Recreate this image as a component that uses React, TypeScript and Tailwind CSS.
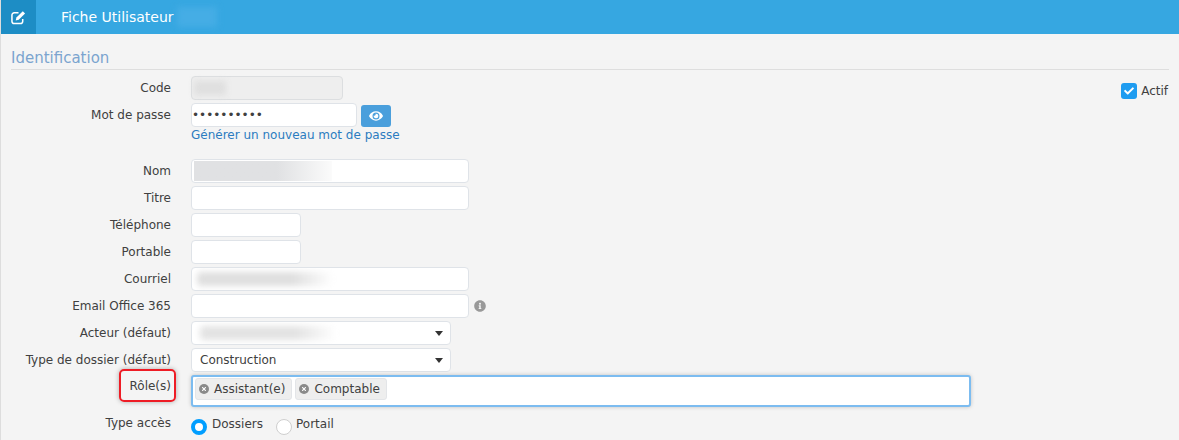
import React from 'react';
import { FaEye, FaInfoCircle, FaCheck, FaTimes } from 'react-icons/fa';

const field = 'h-6 rounded-[4px] border border-[#dfe3e8] bg-white';

function Row({ label, children, className = '' }: { label: React.ReactNode; children: React.ReactNode; className?: string }) {
  return (
    <div className={`flex items-center ${className}`}>
      <div className="w-[160px] shrink-0 text-right">{label}</div>
      <div className="ml-5 flex flex-1 items-center">{children}</div>
    </div>
  );
}

function Select({ children }: { children?: React.ReactNode }) {
  return (
    <div className={`${field} flex w-[260px] items-center overflow-hidden pr-[7px]`}>
      <div className="min-w-0 flex-1">{children}</div>
      <div className="h-0 w-0 border-x-[4px] border-t-[5px] border-x-transparent border-t-[#333]" />
    </div>
  );
}

function Tag({ children }: { children: React.ReactNode }) {
  return (
    <div className="flex h-[22px] items-center rounded-[3px] border border-[#e3e5e8] bg-[#eeeeee] pl-[3px] pr-[6px]">
      <span className="mr-[5px] flex h-[10px] w-[10px] items-center justify-center rounded-full bg-[#8a8a8a] text-white">
        <FaTimes className="h-[6px] w-[6px]" />
      </span>
      {children}
    </div>
  );
}

export default function App() {
  return (
    <div className="h-[440px] w-[1179px] overflow-hidden border-l border-[#dddddd] bg-[#f4f4f4] font-['DejaVu_Sans',sans-serif] text-[12px] leading-[16px] text-[#404040]">
      <div className="-ml-px flex h-[34px] items-center bg-[#36a7e1]">
        <div className="flex h-full w-[36px] items-center justify-center bg-[#1d8dc5] text-white">
          <svg viewBox="0 0 16 16" className="h-[15px] w-[15px]" fill="none">
            <path d="M12.5 9.5v2.5a2.5 2.5 0 0 1-2.5 2.5H3.5A2.5 2.5 0 0 1 1 12V5.5A2.5 2.5 0 0 1 3.5 3H8" stroke="currentColor" strokeWidth="1.6" />
            <path d="M12.6 1.2 15 3.6 8.2 10.4 5 11.2 5.8 8z" fill="currentColor" />
          </svg>
        </div>
        <div className="ml-[25px] text-[14px] text-white">Fiche Utilisateur</div>
        <div className="ml-[3px] h-5 w-10 bg-[#45ade5] blur-[3px]" />
      </div>

      <div className="pl-[10px] pr-[10px]">
        <div className="mt-[15px] h-[21px] border-b border-[#dedede] text-[15px] leading-[18px] text-[#7ba4cf]">Identification</div>

        <div className="mt-[6px] flex flex-col gap-[3px]">
          <Row label="Code" className="h-6">
            <div className="flex h-6 w-[152px] items-center rounded-[4px] border border-[#dcdee0] bg-[#eeeeee]">
              <div className="ml-[2px] h-[14px] w-8 bg-[#dfdfdf] blur-[3px]" />
            </div>
            <div className="ml-auto mr-[1px] mt-[5px] flex items-center">
              <span className="flex h-4 w-4 items-center justify-center rounded-[3px] bg-[#1e9cf0] text-white">
                <FaCheck className="h-[10px] w-[10px]" />
              </span>
              <span className="ml-[4px]">Actif</span>
            </div>
          </Row>

          <div>
            <Row label="Mot de passe" className="h-6">
              <div className={`${field} flex w-[166px] items-center text-[12px]`}>••••••••••</div>
              <button className="ml-1 mt-[1px] flex h-[22px] w-[30px] items-center justify-center rounded-[3px] bg-[#4a9fdc] text-white">
                <FaEye className="h-[14px] w-[14px]" />
              </button>
            </Row>
            <div className="ml-[180px] h-[16px] text-[#2b7cc0]">Générer un nouveau mot de passe</div>
          </div>

          <Row label="Nom" className="mt-[13px] h-6">
            <div className={`${field} flex w-[278px] items-center overflow-hidden`}>
              <div className="ml-[2px] h-5 w-[138px] bg-linear-to-r from-[#e0e1e3] from-60% to-[#fbfbfb]" />
            </div>
          </Row>
          <Row label="Titre" className="h-6"><div className={`${field} w-[278px]`} /></Row>
          <Row label="Téléphone" className="h-6"><div className={`${field} w-[110px]`} /></Row>
          <Row label="Portable" className="h-6"><div className={`${field} w-[110px]`} /></Row>
          <Row label="Courriel" className="h-6">
            <div className={`${field} flex w-[278px] items-center overflow-hidden`}>
              <div className="ml-[5px] h-[14px] w-[136px] rounded-sm bg-linear-to-r from-[#dfdfdf] from-70% to-white blur-[3px]" />
            </div>
          </Row>
          <Row label="Email Office 365" className="h-6">
            <div className={`${field} w-[278px]`} />
            <FaInfoCircle className="ml-[5px] h-3 w-3 text-[#999]" />
          </Row>
          <Row label="Acteur (défaut)" className="h-6">
            <Select>
              <div className="ml-2 h-[14px] w-[136px] rounded-sm bg-linear-to-r from-[#e3e3e3] from-70% to-white blur-[3px]" />
            </Select>
          </Row>
          <Row label="Type de dossier (défaut)" className="h-6">
            <Select><div className="ml-2">Construction</div></Select>
          </Row>
          <Row
            label={
              <div className="relative -mt-[11px]">
                Rôle(s)
                <div className="absolute -bottom-[8px] left-[108px] -right-[5px] -top-[9px] rounded-[5px] border-2 border-[#ee1c25] shadow-[0_0_5px_rgba(0,0,0,0.3)]" />
              </div>
            }
            className="h-[32px]"
          >
            <div className="flex h-[32px] w-[780px] items-start gap-[3px] rounded-[3px] border-2 border-[#7cbcf0] bg-white pl-[2px] pt-[1px] shadow-[0_0_4px_rgba(0,0,0,0.2)]">
              <Tag>Assistant(e)</Tag>
              <Tag>Comptable</Tag>
            </div>
          </Row>
          <Row label="Type accès" className="mt-[3px] h-6 [&>div:first-child]:-mt-[4px]">
            <span className="-mb-[3px] h-4 w-4 rounded-full border-[4px] border-[#009eff] bg-white" />
            <span className="ml-[5px] -mt-[3px]">Dossiers</span>
            <span className="ml-[13px] -mb-[3px] h-4 w-4 rounded-full border border-[#cfcfcf] bg-white" />
            <span className="ml-[4px] -mt-[3px]">Portail</span>
          </Row>
        </div>
      </div>
    </div>
  );
}
